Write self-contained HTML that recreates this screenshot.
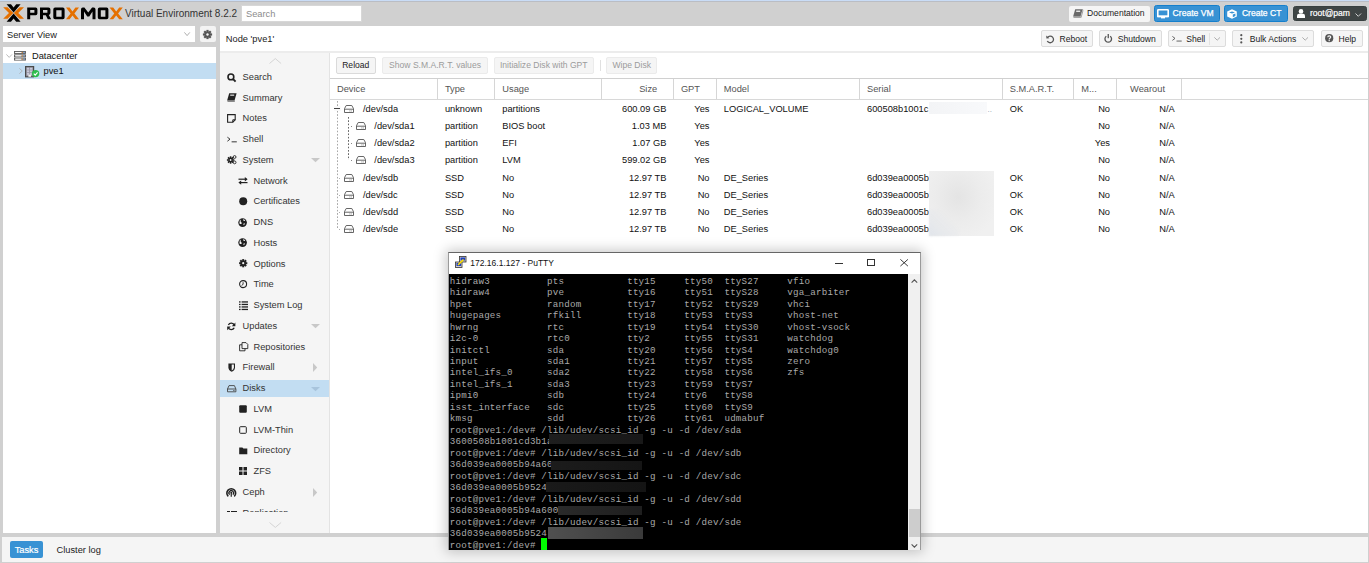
<!DOCTYPE html>
<html><head><meta charset="utf-8">
<style>
*{box-sizing:border-box;margin:0;padding:0}
html,body{width:1369px;height:563px;overflow:hidden}
body{background:#d0d0d0;font-family:"Liberation Sans",sans-serif;font-size:9.29px;color:#000;position:relative}
.a{position:absolute}
svg.a{overflow:visible}
.t{position:absolute;white-space:nowrap}
.term{position:absolute;font-family:"Liberation Mono",monospace;font-size:9.2px;color:#aaaaaa;line-height:11.48px;white-space:pre;letter-spacing:0.208px}
</style></head><body>

<div class="a" style="left:0.00px;top:0.00px;width:1369.00px;height:1.00px;background:#c9dcf6"></div>
<div class="a" style="left:0.00px;top:1.00px;width:1369.00px;height:1.00px;background:#babdc4"></div>
<svg class="a" style="left:0.00px;top:0.00px" width="126" height="26" viewBox="0 0 126 26">
<path d="M3.2 7.2 L7.6 7.2 L13.4 13 L7.6 18.8 L3.2 18.8 L9 13 Z" fill="#e57000"/>
<path d="M24 7.2 L19.6 7.2 L13.8 13 L19.6 18.8 L24 18.8 L18.2 13 Z" fill="#e57000"/>
<path d="M6.6 4.2 L11 4.2 L13.6 7.6 L16.2 4.2 L20.6 4.2 L13.6 12.6 Z" fill="#000"/>
<path d="M6.6 21.8 L11 21.8 L13.6 18.4 L16.2 21.8 L20.6 21.8 L13.6 13.4 Z" fill="#000"/>
<path d="M27.2 19.3 V7.6 H35.7 Q37.4 7.6 37.4 9.3 V13.6 Q37.4 15.3 35.7 15.3 H30.2 V19.3 Z M30.2 10.1 V12.8 H34.4 V10.1 Z" fill="#000" fill-rule="evenodd"/><path d="M40 19.3 V7.6 H48.5 Q50.4 7.6 50.4 9.3 V12.9 Q50.4 14.6 48.8 14.9 L51.2 19.3 H47.8 L45.8 15.2 H43 V19.3 Z M43 10.1 V12.7 H47.4 V10.1 Z" fill="#000" fill-rule="evenodd"/><path d="M55.099999999999994 7.6 H62.8 Q64.6 7.6 64.6 9.4 V17.5 Q64.6 19.3 62.8 19.3 H55.099999999999994 Q53.3 19.3 53.3 17.5 V9.4 Q53.3 7.6 55.099999999999994 7.6 Z M56.3 10.2 V16.7 H61.599999999999994 V10.2 Z" fill="#000" fill-rule="evenodd"/><path d="M66 7.6 H69.6 L72.5 11.5 L75.4 7.6 H79 L74.4 13.45 L79 19.3 H75.4 L72.5 15.4 L69.6 19.3 H66 L70.6 13.45 Z" fill="#e57000"/><path d="M81 19.3 V9.4 Q81 7.6 82.8 7.6 H84.4 L88.25 12.6 L92.1 7.6 H93.7 Q95.5 7.6 95.5 9.4 V19.3 H92.5 V11.6 L89.25 16.4 H87.25 L84 11.6 V19.3 Z" fill="#000"/><path d="M99.6 7.6 H106.6 Q108.39999999999999 7.6 108.39999999999999 9.4 V17.5 Q108.39999999999999 19.3 106.6 19.3 H99.6 Q97.8 19.3 97.8 17.5 V9.4 Q97.8 7.6 99.6 7.6 Z M100.8 10.2 V16.7 H105.39999999999999 V10.2 Z" fill="#000" fill-rule="evenodd"/><path d="M109.6 7.6 H113.19999999999999 L116.19999999999999 11.5 L119.2 7.6 H122.8 L118.1 13.45 L122.8 19.3 H119.2 L116.19999999999999 15.4 L113.19999999999999 19.3 H109.6 L114.29999999999998 13.45 Z" fill="#e57000"/></svg>
<div class="t " style="left:125.00px;top:6.50px;height:14px;line-height:14px;font-size:10.0px;color:#333;">Virtual Environment 8.2.2</div>
<div class="a" style="left:241.00px;top:5.00px;width:121.00px;height:17.00px;background:#fff;border:1px solid #d7d7d7"></div>
<div class="t " style="left:246.00px;top:6.50px;height:14px;line-height:14px;font-size:9.29px;color:#8c8c8c;">Search</div>
<div class="a" style="left:1069.00px;top:5.80px;width:81.00px;height:15.80px;background:#f5f5f5;border-radius:2px"></div>
<svg class="a" style="left:1072.50px;top:9.00px" width="10" height="9" viewBox="0 0 10 9"><path d="M2.2 0.3 H9.6 L7.6 7.3 H0.2 Z" fill="#6a6a6a"/><path d="M0.2 7.3 H7.6 L7.9 8.7 H0.6 Z" fill="#8a8a8a"/><rect x="3.2" y="1.6" width="4" height="1.3" fill="#f5f5f5"/><path d="M9.6 0.3 L9.9 1.8 L8 8.7" stroke="#8a8a8a" stroke-width="0.8" fill="none"/></svg>
<div class="t " style="left:1087.00px;top:6.10px;height:14px;line-height:14px;font-size:8.57px;color:#222;">Documentation</div>
<div class="a" style="left:1154.20px;top:5.20px;width:65.60px;height:16.80px;background:#3892d4;border:1px solid #157fcc;border-radius:2.5px"></div>
<svg class="a" style="left:1157.20px;top:8.60px" width="12" height="10" viewBox="0 0 12 10"><rect x="0.8" y="0.8" width="10.4" height="6.6" fill="none" stroke="#fff" stroke-width="1.6" rx="0.5"/><rect x="4" y="7.8" width="4" height="1.6" fill="#fff"/><rect x="0" y="6.6" width="12" height="1.6" fill="#fff"/></svg>
<div class="t " style="left:1172.60px;top:6.10px;height:14px;line-height:14px;font-size:8.57px;color:#fff;-webkit-text-stroke:0.25px #fff">Create VM</div>
<div class="a" style="left:1223.90px;top:5.20px;width:63.80px;height:16.80px;background:#3892d4;border:1px solid #157fcc;border-radius:2.5px"></div>
<svg class="a" style="left:1227.00px;top:9.00px" width="10" height="10" viewBox="0 0 10 10"><path d="M5 0.2 L9.8 2.4 V7.6 L5 9.8 L0.2 7.6 V2.4 Z" fill="#fff"/><path d="M5 2.6 L8 3.4 L5 4.4 L2 3.4 Z" fill="#3892d4"/><path d="M5.8 5.4 L8.4 4.4 V7 L5.8 8.2 Z" fill="#3892d4"/></svg>
<div class="t " style="left:1241.90px;top:6.10px;height:14px;line-height:14px;font-size:8.57px;color:#fff;-webkit-text-stroke:0.25px #fff">Create CT</div>
<div class="a" style="left:1292.80px;top:6.00px;width:74.00px;height:15.00px;background:#3f4545;border:1px solid #384040;border-radius:2.5px"></div>
<svg class="a" style="left:1296.50px;top:8.90px" width="8" height="9" viewBox="0 0 8 9"><circle cx="4" cy="2.4" r="2.3" fill="#fff"/><path d="M0 9 V6.8 Q0 4.8 2 4.8 H6 Q8 4.8 8 6.8 V9 Z" fill="#fff"/></svg>
<div class="t " style="left:1309.90px;top:6.10px;height:14px;line-height:14px;font-size:8.57px;color:#fff;-webkit-text-stroke:0.2px #fff">root@pam</div>
<svg class="a" style="left:1355.00px;top:12.80px" width="7" height="4" viewBox="0 0 7 4"><path d="M0.5 0.5 L3.3 3.3 L6.1 0.5" stroke="#ddd" stroke-width="0.9" fill="none"/></svg>
<div class="a" style="left:3.00px;top:26.40px;width:192.00px;height:15.80px;background:#fff"></div>
<div class="t " style="left:7.00px;top:28.00px;height:14px;line-height:14px;font-size:9.29px;color:#222;">Server View</div>
<svg class="a" style="left:184.00px;top:32.20px" width="7" height="4.5" viewBox="0 0 7 4.5"><path d="M0.4 0.4 L3.1 3.6 L5.8 0.4" stroke="#999" stroke-width="0.8" fill="none"/></svg>
<div class="a" style="left:200.00px;top:26.40px;width:16.00px;height:15.80px;background:#f3f3f3;border-radius:2px"></div>
<svg class="a" style="left:203.20px;top:29.80px" width="9" height="9" viewBox="0 0 9 9"><g transform="translate(4.5,4.5)" fill="#555"><rect x="-1.1" y="-4.6" width="2.2" height="2.6" transform="rotate(0)"/><rect x="-1.1" y="-4.6" width="2.2" height="2.6" transform="rotate(45)"/><rect x="-1.1" y="-4.6" width="2.2" height="2.6" transform="rotate(90)"/><rect x="-1.1" y="-4.6" width="2.2" height="2.6" transform="rotate(135)"/><rect x="-1.1" y="-4.6" width="2.2" height="2.6" transform="rotate(180)"/><rect x="-1.1" y="-4.6" width="2.2" height="2.6" transform="rotate(225)"/><rect x="-1.1" y="-4.6" width="2.2" height="2.6" transform="rotate(270)"/><rect x="-1.1" y="-4.6" width="2.2" height="2.6" transform="rotate(315)"/><circle r="3.1"/></g><circle cx="4.5" cy="4.5" r="1.2" fill="#f3f3f3"/></svg>
<div class="a" style="left:3.00px;top:47.00px;width:213.00px;height:486.00px;background:#fff"></div>
<div class="a" style="left:3.00px;top:63.20px;width:213.00px;height:15.50px;background:#c2ddf2"></div>
<svg class="a" style="left:6.40px;top:54.00px" width="6.5" height="4" viewBox="0 0 6.5 4"><path d="M0.4 0.4 L3.2 3.4 L6 0.4" stroke="#aaa" stroke-width="0.8" fill="none"/></svg>
<svg class="a" style="left:14.00px;top:51.20px" width="12" height="9" viewBox="0 0 12 9"><rect x="0.5" y="0.5" width="11" height="2" fill="#e8e8e8" stroke="#5a5a5a" stroke-width="0.9"/><rect x="1.6" y="1.2" width="5.5" height="0.8" fill="#fff"/><rect x="7.6" y="1.0" width="1.4" height="1.2" fill="#c08040"/><rect x="9.4" y="1.0" width="1.2" height="1.2" fill="#4070b0"/><rect x="0.5" y="3.8" width="11" height="2" fill="#e8e8e8" stroke="#5a5a5a" stroke-width="0.9"/><rect x="1.6" y="4.5" width="5.5" height="0.8" fill="#fff"/><rect x="7.6" y="4.3" width="1.4" height="1.2" fill="#c08040"/><rect x="9.4" y="4.3" width="1.2" height="1.2" fill="#4070b0"/><rect x="0.5" y="7.1" width="11" height="2" fill="#e8e8e8" stroke="#5a5a5a" stroke-width="0.9"/><rect x="1.6" y="7.8" width="5.5" height="0.8" fill="#fff"/><rect x="7.6" y="7.6" width="1.4" height="1.2" fill="#c08040"/><rect x="9.4" y="7.6" width="1.2" height="1.2" fill="#4070b0"/></svg>
<div class="t " style="left:32.00px;top:48.50px;height:14px;line-height:14px;font-size:9.29px;color:#111;">Datacenter</div>
<svg class="a" style="left:19.20px;top:68.40px" width="4" height="6" viewBox="0 0 4 6"><path d="M0.4 0.4 L3.3 3 L0.4 5.6" stroke="#aaa" stroke-width="0.8" fill="none"/></svg>
<svg class="a" style="left:25.20px;top:66.00px" width="14" height="11.5" viewBox="0 0 14 11.5"><rect x="0.6" y="0.6" width="8" height="10.2" fill="#9a9aa8" stroke="#4a4a4a" stroke-width="1.2"/><rect x="1.9" y="1.8" width="2.2" height="1.8" fill="#c8c8d8"/><rect x="5.0" y="1.8" width="2.2" height="1.8" fill="#c8c8d8"/><rect x="1.9" y="4.4" width="2.2" height="1.8" fill="#c8c8d8"/><rect x="5.0" y="4.4" width="2.2" height="1.8" fill="#c8c8d8"/><rect x="1.9" y="7.0" width="2.2" height="1.8" fill="#c8c8d8"/><rect x="5.0" y="7.0" width="2.2" height="1.8" fill="#c8c8d8"/><rect x="3.4" y="8.6" width="2.6" height="2.2" fill="#eee"/><circle cx="10.6" cy="7.6" r="3.7" fill="#2ebd4e"/><path d="M8.8 7.7 L10.2 9.1 L12.6 6.4" stroke="#fff" stroke-width="1.1" fill="none"/></svg>
<div class="t " style="left:43.50px;top:64.00px;height:14px;line-height:14px;font-size:9.29px;color:#111;">pve1</div>
<div class="a" style="left:220.00px;top:26.00px;width:1148.20px;height:507.00px;background:#fff"></div>
<div class="a" style="left:1368.20px;top:26.00px;width:0.80px;height:537.00px;background:#cfcfcf"></div>
<div class="a" style="left:220.00px;top:51.00px;width:1148.00px;height:2.00px;background:#ececec"></div>
<div class="t " style="left:225.80px;top:31.60px;height:14px;line-height:14px;font-size:9.29px;color:#222;">Node 'pve1'</div>
<div class="a" style="left:1041.40px;top:30.10px;width:52.10px;height:16.60px;background:#f5f5f5;border:1px solid #dcdcdc;border-radius:2px"></div>
<svg class="a" style="left:1045.80px;top:34.50px" width="8.5" height="8.5" viewBox="0 0 8.5 8.5"><path d="M1.6 2.4 A3.3 3.3 0 1 1 1.3 6" stroke="#555" stroke-width="1.3" fill="none"/><path d="M0.2 0.6 L0.4 3.6 L3.4 3.2 Z" fill="#555"/></svg>
<div class="t " style="left:1059.50px;top:31.60px;height:14px;line-height:14px;font-size:8.57px;color:#222;">Reboot</div>
<div class="a" style="left:1099.10px;top:30.10px;width:62.60px;height:16.60px;background:#f5f5f5;border:1px solid #dcdcdc;border-radius:2px"></div>
<svg class="a" style="left:1103.50px;top:34.40px" width="8.5" height="8.6" viewBox="0 0 8.5 8.6"><path d="M2.3 2.2 A3.3 3.3 0 1 0 6.2 2.2" stroke="#555" stroke-width="1.3" fill="none"/><rect x="3.6" y="0" width="1.3" height="4.2" fill="#555"/></svg>
<div class="t " style="left:1117.70px;top:31.60px;height:14px;line-height:14px;font-size:8.57px;color:#222;">Shutdown</div>
<div class="a" style="left:1168.20px;top:30.10px;width:57.50px;height:16.60px;background:#f5f5f5;border:1px solid #dcdcdc;border-radius:2px"></div>
<svg class="a" style="left:1171.50px;top:35.00px" width="10" height="7" viewBox="0 0 10 7"><path d="M0.4 1.4 L3 3.4 L0.4 5.4" stroke="#555" stroke-width="0.9" fill="none"/><rect x="4.5" y="5.6" width="5.2" height="0.9" fill="#555"/></svg>
<div class="t " style="left:1186.20px;top:31.60px;height:14px;line-height:14px;font-size:8.57px;color:#222;">Shell</div>
<div class="a" style="left:1209.40px;top:32.50px;width:0.80px;height:12.00px;background:#e2e2e2"></div>
<svg class="a" style="left:1214.20px;top:37.20px" width="6.5" height="4" viewBox="0 0 6.5 4"><path d="M0.4 0.4 L3.2 3.2 L6 0.4" stroke="#999" stroke-width="0.8" fill="none"/></svg>
<div class="a" style="left:1232.10px;top:30.10px;width:81.60px;height:16.60px;background:#f5f5f5;border:1px solid #dcdcdc;border-radius:2px"></div>
<svg class="a" style="left:1239.50px;top:33.80px" width="3" height="10" viewBox="0 0 3 10"><circle cx="1.3" cy="1.2" r="1.1" fill="#555"/><circle cx="1.3" cy="4.8" r="1.1" fill="#555"/><circle cx="1.3" cy="8.4" r="1.1" fill="#555"/></svg>
<div class="t " style="left:1249.70px;top:31.60px;height:14px;line-height:14px;font-size:8.57px;color:#222;">Bulk Actions</div>
<svg class="a" style="left:1301.80px;top:37.20px" width="6.5" height="4" viewBox="0 0 6.5 4"><path d="M0.4 0.4 L3.2 3.2 L6 0.4" stroke="#999" stroke-width="0.8" fill="none"/></svg>
<div class="a" style="left:1320.50px;top:30.10px;width:42.40px;height:16.60px;background:#f5f5f5;border:1px solid #dcdcdc;border-radius:2px"></div>
<svg class="a" style="left:1325.00px;top:34.40px" width="8.4" height="8.4" viewBox="0 0 8.4 8.4"><circle cx="4.2" cy="4.2" r="4.1" fill="#555"/><path d="M2.8 3.3 Q2.8 1.8 4.2 1.8 Q5.7 1.8 5.7 3.1 Q5.7 3.9 4.7 4.4 Q4.2 4.7 4.2 5.4" stroke="#f5f5f5" stroke-width="1.2" fill="none"/><rect x="3.6" y="6" width="1.2" height="1.2" fill="#f5f5f5"/></svg>
<div class="t " style="left:1338.50px;top:31.60px;height:14px;line-height:14px;font-size:8.57px;color:#222;">Help</div>
<div class="a" style="left:220.00px;top:53.00px;width:109.20px;height:480.00px;background:#f5f5f5"></div>
<div class="a" style="left:329.20px;top:53.00px;width:0.80px;height:480.00px;background:#e3e3e3"></div>
<svg class="a" style="left:269.00px;top:57.50px" width="13" height="6" viewBox="0 0 13 6"><path d="M0.5 5.5 L6.3 0.6 L12.1 5.5" stroke="#ccc" stroke-width="0.8" fill="none"/></svg>
<svg class="a" style="left:269.00px;top:521.50px" width="13" height="6" viewBox="0 0 13 6"><path d="M0.5 0.5 L6.3 5.4 L12.1 0.5" stroke="#ccc" stroke-width="0.8" fill="none"/></svg>
<div class="a" style="left:219.50px;top:380.00px;width:109.80px;height:17.20px;background:#c2ddf2"></div>
<div class="a" style="left:220px;top:52px;width:109px;height:460px;overflow:hidden">
<div class="t" style="left:22.60px;top:17.80px;height:14px;line-height:14px;font-size:9.29px;color:#333">Search</div>
<div class="t" style="left:22.60px;top:38.56px;height:14px;line-height:14px;font-size:9.29px;color:#333">Summary</div>
<div class="t" style="left:22.60px;top:59.32px;height:14px;line-height:14px;font-size:9.29px;color:#333">Notes</div>
<div class="t" style="left:22.60px;top:80.08px;height:14px;line-height:14px;font-size:9.29px;color:#333">Shell</div>
<div class="t" style="left:22.60px;top:100.84px;height:14px;line-height:14px;font-size:9.29px;color:#333">System</div>
<div class="t" style="left:33.50px;top:121.60px;height:14px;line-height:14px;font-size:9.29px;color:#333">Network</div>
<div class="t" style="left:33.50px;top:142.36px;height:14px;line-height:14px;font-size:9.29px;color:#333">Certificates</div>
<div class="t" style="left:33.50px;top:163.12px;height:14px;line-height:14px;font-size:9.29px;color:#333">DNS</div>
<div class="t" style="left:33.50px;top:183.88px;height:14px;line-height:14px;font-size:9.29px;color:#333">Hosts</div>
<div class="t" style="left:33.50px;top:204.64px;height:14px;line-height:14px;font-size:9.29px;color:#333">Options</div>
<div class="t" style="left:33.50px;top:225.40px;height:14px;line-height:14px;font-size:9.29px;color:#333">Time</div>
<div class="t" style="left:33.50px;top:246.16px;height:14px;line-height:14px;font-size:9.29px;color:#333">System Log</div>
<div class="t" style="left:22.60px;top:266.92px;height:14px;line-height:14px;font-size:9.29px;color:#333">Updates</div>
<div class="t" style="left:33.50px;top:287.68px;height:14px;line-height:14px;font-size:9.29px;color:#333">Repositories</div>
<div class="t" style="left:22.60px;top:308.44px;height:14px;line-height:14px;font-size:9.29px;color:#333">Firewall</div>
<div class="t" style="left:22.60px;top:329.20px;height:14px;line-height:14px;font-size:9.29px;color:#333">Disks</div>
<div class="t" style="left:33.50px;top:349.96px;height:14px;line-height:14px;font-size:9.29px;color:#333">LVM</div>
<div class="t" style="left:33.50px;top:370.72px;height:14px;line-height:14px;font-size:9.29px;color:#333">LVM-Thin</div>
<div class="t" style="left:33.50px;top:391.48px;height:14px;line-height:14px;font-size:9.29px;color:#333">Directory</div>
<div class="t" style="left:33.50px;top:412.24px;height:14px;line-height:14px;font-size:9.29px;color:#333">ZFS</div>
<div class="t" style="left:22.60px;top:433.00px;height:14px;line-height:14px;font-size:9.29px;color:#333">Ceph</div>
<div class="t" style="left:22.60px;top:453.76px;height:14px;line-height:14px;font-size:9.29px;color:#333">Replication</div>
</div>
<svg class="a" style="left:227.00px;top:72.50px" width="9.5" height="9" viewBox="0 0 9.5 9"><circle cx="3.9" cy="3.9" r="2.9" stroke="#222" stroke-width="1.6" fill="none"/><path d="M6 6 L8.6 8.6" stroke="#222" stroke-width="1.8"/></svg>
<svg class="a" style="left:226.90px;top:93.26px" width="10" height="9" viewBox="0 0 10 9"><path d="M2.2 0.3 H9.6 L7.6 7.3 H0.2 Z" fill="#222"/><path d="M0.2 7.3 H7.6 L7.9 8.7 H0.6 Z" fill="#666"/><rect x="3.2" y="1.6" width="4" height="1.1" fill="#f5f5f5"/></svg>
<svg class="a" style="left:227.20px;top:114.02px" width="9" height="9" viewBox="0 0 9 9"><path d="M0.6 0.6 H8.2 V5.8 L5.8 8.2 H0.6 Z" stroke="#222" stroke-width="1.1" fill="none"/><path d="M8.2 5.8 H5.8 V8.2" stroke="#222" stroke-width="1" fill="none"/></svg>
<svg class="a" style="left:226.50px;top:136.28px" width="10.5" height="7" viewBox="0 0 10.5 7"><path d="M0.4 1.2 L3 3.2 L0.4 5.2" stroke="#222" stroke-width="0.9" fill="none"/><rect x="4.6" y="5.4" width="5.2" height="0.9" fill="#222"/></svg>
<svg class="a" style="left:226.70px;top:155.34px" width="10" height="9" viewBox="0 0 10 9"><g transform="translate(3.6,5)"><circle r="2.4" fill="#222"/><rect x="-0.8" y="-3.7" width="1.6" height="1.8" fill="#222" transform="rotate(0)"/><rect x="-0.8" y="-3.7" width="1.6" height="1.8" fill="#222" transform="rotate(45)"/><rect x="-0.8" y="-3.7" width="1.6" height="1.8" fill="#222" transform="rotate(90)"/><rect x="-0.8" y="-3.7" width="1.6" height="1.8" fill="#222" transform="rotate(135)"/><rect x="-0.8" y="-3.7" width="1.6" height="1.8" fill="#222" transform="rotate(180)"/><rect x="-0.8" y="-3.7" width="1.6" height="1.8" fill="#222" transform="rotate(225)"/><rect x="-0.8" y="-3.7" width="1.6" height="1.8" fill="#222" transform="rotate(270)"/><rect x="-0.8" y="-3.7" width="1.6" height="1.8" fill="#222" transform="rotate(315)"/><circle r="0.9" fill="#f5f5f5"/></g><g transform="translate(7.6,2)"><circle r="1.4" stroke="#222" stroke-width="0.9" fill="none"/></g><g transform="translate(7.6,7.4)"><circle r="1.4" stroke="#222" stroke-width="0.9" fill="none"/></g></svg>
<svg class="a" style="left:238.00px;top:177.00px" width="10" height="7.5" viewBox="0 0 10 7.5"><path d="M0.5 2.2 H8.5" stroke="#222" stroke-width="1.2"/><path d="M6.8 0 L9.6 2.2 L6.8 4.4 Z" fill="#222" transform="translate(0,-0)"/><path d="M1.5 5.6 H9.5" stroke="#222" stroke-width="1.2"/><path d="M3.2 3.4 L0.4 5.6 L3.2 7.8 Z" fill="#222"/></svg>
<svg class="a" style="left:238.80px;top:197.16px" width="8.5" height="8.5" viewBox="0 0 8.5 8.5"><circle cx="4.2" cy="4.2" r="4" fill="#222"/></svg>
<svg class="a" style="left:238.40px;top:217.52px" width="9.5" height="9.5" viewBox="0 0 9.5 9.5"><circle cx="4.6" cy="4.6" r="4.3" fill="#222"/><path d="M2 1.6 Q3.2 2.4 2.6 3.6 Q4 4.4 3.6 6 Q2.2 6.4 1.4 5.2 Z M5.2 1 Q6.8 1.4 7.2 3 Q6 3.4 5.4 2.4 Z M5.6 5.4 Q6.6 5 7 5.8 Q6.4 7 5.4 7.2 Z" fill="#f5f5f5"/></svg>
<svg class="a" style="left:238.40px;top:238.28px" width="9.5" height="9.5" viewBox="0 0 9.5 9.5"><circle cx="4.6" cy="4.6" r="4.3" fill="#222"/><path d="M2 1.6 Q3.2 2.4 2.6 3.6 Q4 4.4 3.6 6 Q2.2 6.4 1.4 5.2 Z M5.2 1 Q6.8 1.4 7.2 3 Q6 3.4 5.4 2.4 Z M5.6 5.4 Q6.6 5 7 5.8 Q6.4 7 5.4 7.2 Z" fill="#f5f5f5"/></svg>
<svg class="a" style="left:238.80px;top:259.44px" width="8.5" height="8.5" viewBox="0 0 8.5 8.5"><g transform="translate(4.2,4.2)"><circle r="2.8" fill="#222"/><rect x="-1" y="-4.1" width="2" height="2.2" fill="#222" transform="rotate(0)"/><rect x="-1" y="-4.1" width="2" height="2.2" fill="#222" transform="rotate(45)"/><rect x="-1" y="-4.1" width="2" height="2.2" fill="#222" transform="rotate(90)"/><rect x="-1" y="-4.1" width="2" height="2.2" fill="#222" transform="rotate(135)"/><rect x="-1" y="-4.1" width="2" height="2.2" fill="#222" transform="rotate(180)"/><rect x="-1" y="-4.1" width="2" height="2.2" fill="#222" transform="rotate(225)"/><rect x="-1" y="-4.1" width="2" height="2.2" fill="#222" transform="rotate(270)"/><rect x="-1" y="-4.1" width="2" height="2.2" fill="#222" transform="rotate(315)"/><circle r="1.1" fill="#f5f5f5"/></g></svg>
<svg class="a" style="left:238.90px;top:280.30px" width="8.5" height="8.5" viewBox="0 0 8.5 8.5"><circle cx="4.1" cy="4.1" r="3.5" stroke="#222" stroke-width="1.1" fill="none"/><path d="M4.1 2.2 V4.4 L2.6 5.4" stroke="#222" stroke-width="0.9" fill="none"/></svg>
<svg class="a" style="left:238.50px;top:300.66px" width="9" height="9.5" viewBox="0 0 9 9.5"><rect x="0" y="0.3" width="1.6" height="1.3" fill="#222"/><rect x="2.6" y="0.3" width="6.4" height="1.3" fill="#222"/><rect x="0" y="2.8" width="1.6" height="1.3" fill="#222"/><rect x="2.6" y="2.8" width="6.4" height="1.3" fill="#222"/><rect x="0" y="5.3" width="1.6" height="1.3" fill="#222"/><rect x="2.6" y="5.3" width="6.4" height="1.3" fill="#222"/><rect x="0" y="7.8" width="1.6" height="1.3" fill="#222"/><rect x="2.6" y="7.8" width="6.4" height="1.3" fill="#222"/></svg>
<svg class="a" style="left:227.10px;top:321.52px" width="9" height="9" viewBox="0 0 9 9"><path d="M7.4 3.2 A3.3 3.3 0 0 0 1.4 3" stroke="#222" stroke-width="1.4" fill="none"/><path d="M8.4 0.6 V4.2 H4.8 Z" fill="#222"/><path d="M1.2 5.6 A3.3 3.3 0 0 0 7.2 5.8" stroke="#222" stroke-width="1.4" fill="none"/><path d="M0.2 8.2 V4.6 H3.8 Z" fill="#222"/></svg>
<svg class="a" style="left:238.50px;top:342.08px" width="9.5" height="9.5" viewBox="0 0 9.5 9.5"><path d="M3 0.6 H7 L8.8 2.4 V6.6 H3 Z" stroke="#222" stroke-width="0.9" fill="none"/><path d="M0.6 2.8 H3 M0.6 2.8 V8.8 H6 V6.6" stroke="#222" stroke-width="0.9" fill="none"/></svg>
<svg class="a" style="left:227.90px;top:363.04px" width="7.5" height="9" viewBox="0 0 7.5 9"><path d="M0.4 0.6 H7 V4.2 Q7 7.2 3.7 8.8 Q0.4 7.2 0.4 4.2 Z" fill="#222"/><path d="M3.7 1.6 H5.9 V4.2 Q5.9 6.4 3.7 7.5 Z" fill="#f5f5f5"/></svg>
<svg class="a" style="left:226.90px;top:384.60px" width="9.5" height="7.5" viewBox="0 0 9.5 7.5"><path d="M2 0.6 H7.4 L8.9 4 V6.8 H0.5 V4 Z" stroke="#444" stroke-width="0.9" fill="none"/><path d="M0.5 4 H8.9" stroke="#444" stroke-width="0.9"/><rect x="6.3" y="5" width="1.2" height="0.9" fill="#444"/></svg>
<svg class="a" style="left:239.00px;top:404.96px" width="8" height="8" viewBox="0 0 8 8"><rect x="0.2" y="0.2" width="7.6" height="7.6" rx="1" fill="#222"/></svg>
<svg class="a" style="left:239.00px;top:425.72px" width="8" height="8" viewBox="0 0 8 8"><rect x="0.7" y="0.7" width="6.6" height="6.6" rx="0.8" stroke="#222" stroke-width="1" fill="none"/></svg>
<svg class="a" style="left:238.80px;top:446.68px" width="8.5" height="7.5" viewBox="0 0 8.5 7.5"><path d="M0.2 0.4 H3.4 L4.4 1.4 H8.3 V7.2 H0.2 Z" fill="#222"/></svg>
<svg class="a" style="left:239.00px;top:467.24px" width="8" height="8" viewBox="0 0 8 8"><rect x="0" y="0" width="3.5" height="3.5" fill="#222"/><rect x="4.5" y="0" width="3.5" height="3.5" fill="#222"/><rect x="0" y="4.5" width="3.5" height="3.5" fill="#222"/><rect x="4.5" y="4.5" width="3.5" height="3.5" fill="#222"/></svg>
<svg class="a" style="left:226.30px;top:486.60px" width="10.5" height="10.5" viewBox="0 0 10.5 10.5"><path d="M2.3 9.4 A4.4 4.4 0 1 1 8.2 9.4" stroke="#222" stroke-width="1.6" fill="none"/><path d="M3.6 7.6 A2.3 2.3 0 1 1 6.9 7.6" stroke="#222" stroke-width="1.3" fill="none"/><circle cx="5.25" cy="5.6" r="0.9" fill="#222"/><path d="M5.25 5.6 V9.8" stroke="#222" stroke-width="1.2"/></svg>
<div class="a" style="left:225px;top:508px;width:20px;height:4px;overflow:hidden"><div class="a" style="left:2px;top:2.5px;width:3px;height:1.6px;background:#222"></div><div class="a" style="left:5.5px;top:2.5px;width:6px;height:1.6px;background:#222"></div></div>
<svg class="a" style="left:311.00px;top:158.20px" width="9" height="4.5" viewBox="0 0 9 4.5"><path d="M0 0 H9 L4.5 4.2 Z" fill="#c8c8c8"/></svg>
<svg class="a" style="left:311.00px;top:324.30px" width="9" height="4.5" viewBox="0 0 9 4.5"><path d="M0 0 H9 L4.5 4.2 Z" fill="#c8c8c8"/></svg>
<svg class="a" style="left:312.50px;top:362.90px" width="4.5" height="9" viewBox="0 0 4.5 9"><path d="M0 0 V9 L4.2 4.5 Z" fill="#c8c8c8"/></svg>
<svg class="a" style="left:311.00px;top:386.50px" width="9" height="4.5" viewBox="0 0 9 4.5"><path d="M0 0 H9 L4.5 4.2 Z" fill="#a8c4dc"/></svg>
<svg class="a" style="left:312.50px;top:487.50px" width="4.5" height="9" viewBox="0 0 4.5 9"><path d="M0 0 V9 L4.2 4.5 Z" fill="#c8c8c8"/></svg>
<div class="a" style="left:336.00px;top:56.70px;width:39.50px;height:16.90px;background:#f5f5f5;border:1px solid #dadada;border-radius:2px"></div>
<div class="t " style="left:355.75px;top:58.15px;height:14px;line-height:14px;font-size:8.57px;color:#222;transform:translateX(-50%)">Reload</div>
<div class="a" style="left:382.40px;top:56.70px;width:105.20px;height:16.90px;background:#f5f5f5;border:1px solid #ebebeb;border-radius:2px"></div>
<div class="t " style="left:435.00px;top:58.15px;height:14px;line-height:14px;font-size:8.57px;color:#9b9b9b;transform:translateX(-50%)">Show S.M.A.R.T. values</div>
<div class="a" style="left:493.50px;top:56.70px;width:100.50px;height:16.90px;background:#f5f5f5;border:1px solid #ebebeb;border-radius:2px"></div>
<div class="t " style="left:543.75px;top:58.15px;height:14px;line-height:14px;font-size:8.57px;color:#9b9b9b;transform:translateX(-50%)">Initialize Disk with GPT</div>
<div class="a" style="left:600.00px;top:59.50px;width:0.80px;height:11.00px;background:#e0e0e0"></div>
<div class="a" style="left:606.40px;top:56.70px;width:50.60px;height:16.90px;background:#f5f5f5;border:1px solid #ebebeb;border-radius:2px"></div>
<div class="t " style="left:631.70px;top:58.15px;height:14px;line-height:14px;font-size:8.57px;color:#9b9b9b;transform:translateX(-50%)">Wipe Disk</div>
<div class="a" style="left:330.00px;top:78.00px;width:1038.20px;height:1.00px;background:#d0d0d0"></div>
<div class="a" style="left:330.00px;top:99.00px;width:1038.20px;height:1.00px;background:#d8d8d8"></div>
<div class="a" style="left:436.90px;top:79.00px;width:1.00px;height:20.00px;background:#d6d6d6"></div>
<div class="a" style="left:493.80px;top:79.00px;width:1.00px;height:20.00px;background:#d6d6d6"></div>
<div class="a" style="left:600.50px;top:79.00px;width:1.00px;height:20.00px;background:#d6d6d6"></div>
<div class="a" style="left:672.70px;top:79.00px;width:1.00px;height:20.00px;background:#d6d6d6"></div>
<div class="a" style="left:716.30px;top:79.00px;width:1.00px;height:20.00px;background:#d6d6d6"></div>
<div class="a" style="left:858.90px;top:79.00px;width:1.00px;height:20.00px;background:#d6d6d6"></div>
<div class="a" style="left:1002.10px;top:79.00px;width:1.00px;height:20.00px;background:#d6d6d6"></div>
<div class="a" style="left:1073.00px;top:79.00px;width:1.00px;height:20.00px;background:#d6d6d6"></div>
<div class="a" style="left:1116.30px;top:79.00px;width:1.00px;height:20.00px;background:#d6d6d6"></div>
<div class="a" style="left:1181.30px;top:79.00px;width:1.00px;height:20.00px;background:#d6d6d6"></div>
<div class="t " style="left:337.00px;top:82.00px;height:14px;line-height:14px;font-size:9.29px;color:#555;">Device</div>
<div class="t " style="left:444.90px;top:82.00px;height:14px;line-height:14px;font-size:9.29px;color:#555;">Type</div>
<div class="t " style="left:502.30px;top:82.00px;height:14px;line-height:14px;font-size:9.29px;color:#555;">Usage</div>
<div class="t " style="right:711.80px;top:82.00px;height:14px;line-height:14px;font-size:9.29px;color:#555;">Size</div>
<div class="t " style="left:680.90px;top:82.00px;height:14px;line-height:14px;font-size:9.29px;color:#555;">GPT</div>
<div class="t " style="left:723.80px;top:82.00px;height:14px;line-height:14px;font-size:9.29px;color:#555;">Model</div>
<div class="t " style="left:867.00px;top:82.00px;height:14px;line-height:14px;font-size:9.29px;color:#555;">Serial</div>
<div class="t " style="left:1009.70px;top:82.00px;height:14px;line-height:14px;font-size:9.29px;color:#555;">S.M.A.R.T.</div>
<div class="t " style="left:1081.30px;top:82.00px;height:14px;line-height:14px;font-size:9.29px;color:#555;">M...</div>
<div class="t " style="right:204.00px;top:82.00px;height:14px;line-height:14px;font-size:9.29px;color:#555;">Wearout</div>
<svg class="a" style="left:344.10px;top:105.00px" width="10" height="8" viewBox="0 0 10 8"><path d="M2.2 0.5 H7.8 L9.5 3.6 V7.5 H0.5 V3.6 Z" stroke="#555" stroke-width="0.9" fill="none"/><path d="M0.5 4.2 H9.5" stroke="#555" stroke-width="0.9"/><rect x="6.6" y="5.5" width="1.1" height="0.9" fill="#777"/><rect x="5.2" y="5.5" width="0.9" height="0.9" fill="#999"/></svg>
<div class="t " style="left:363.00px;top:102.00px;height:14px;line-height:14px;font-size:9.29px;color:#111;">/dev/sda</div>
<div class="t " style="left:444.90px;top:102.00px;height:14px;line-height:14px;font-size:9.29px;color:#111;">unknown</div>
<div class="t " style="left:502.30px;top:102.00px;height:14px;line-height:14px;font-size:9.29px;color:#111;">partitions</div>
<div class="t " style="right:702.60px;top:102.00px;height:14px;line-height:14px;font-size:9.29px;color:#111;">600.09 GB</div>
<div class="t " style="right:659.50px;top:102.00px;height:14px;line-height:14px;font-size:9.29px;color:#111;">Yes</div>
<div class="t " style="left:723.80px;top:102.00px;height:14px;line-height:14px;font-size:9.29px;color:#111;">LOGICAL_VOLUME</div>
<div class="t " style="left:867.00px;top:102.00px;height:14px;line-height:14px;font-size:9.29px;color:#111;">600508b1001c</div>
<div class="t " style="left:1009.70px;top:102.00px;height:14px;line-height:14px;font-size:9.29px;color:#111;">OK</div>
<div class="t " style="right:259.00px;top:102.00px;height:14px;line-height:14px;font-size:9.29px;color:#111;">No</div>
<div class="t " style="right:194.20px;top:102.00px;height:14px;line-height:14px;font-size:9.29px;color:#111;">N/A</div>
<svg class="a" style="left:355.60px;top:122.14px" width="10" height="8" viewBox="0 0 10 8"><path d="M2.2 0.5 H7.8 L9.5 3.6 V7.5 H0.5 V3.6 Z" stroke="#555" stroke-width="0.9" fill="none"/><path d="M0.5 4.2 H9.5" stroke="#555" stroke-width="0.9"/><rect x="6.6" y="5.5" width="1.1" height="0.9" fill="#777"/><rect x="5.2" y="5.5" width="0.9" height="0.9" fill="#999"/></svg>
<div class="t " style="left:374.30px;top:119.14px;height:14px;line-height:14px;font-size:9.29px;color:#111;">/dev/sda1</div>
<div class="t " style="left:444.90px;top:119.14px;height:14px;line-height:14px;font-size:9.29px;color:#111;">partition</div>
<div class="t " style="left:502.30px;top:119.14px;height:14px;line-height:14px;font-size:9.29px;color:#111;">BIOS boot</div>
<div class="t " style="right:702.60px;top:119.14px;height:14px;line-height:14px;font-size:9.29px;color:#111;">1.03 MB</div>
<div class="t " style="right:659.50px;top:119.14px;height:14px;line-height:14px;font-size:9.29px;color:#111;">Yes</div>
<div class="t " style="right:259.00px;top:119.14px;height:14px;line-height:14px;font-size:9.29px;color:#111;">No</div>
<div class="t " style="right:194.20px;top:119.14px;height:14px;line-height:14px;font-size:9.29px;color:#111;">N/A</div>
<svg class="a" style="left:355.60px;top:139.28px" width="10" height="8" viewBox="0 0 10 8"><path d="M2.2 0.5 H7.8 L9.5 3.6 V7.5 H0.5 V3.6 Z" stroke="#555" stroke-width="0.9" fill="none"/><path d="M0.5 4.2 H9.5" stroke="#555" stroke-width="0.9"/><rect x="6.6" y="5.5" width="1.1" height="0.9" fill="#777"/><rect x="5.2" y="5.5" width="0.9" height="0.9" fill="#999"/></svg>
<div class="t " style="left:374.30px;top:136.28px;height:14px;line-height:14px;font-size:9.29px;color:#111;">/dev/sda2</div>
<div class="t " style="left:444.90px;top:136.28px;height:14px;line-height:14px;font-size:9.29px;color:#111;">partition</div>
<div class="t " style="left:502.30px;top:136.28px;height:14px;line-height:14px;font-size:9.29px;color:#111;">EFI</div>
<div class="t " style="right:702.60px;top:136.28px;height:14px;line-height:14px;font-size:9.29px;color:#111;">1.07 GB</div>
<div class="t " style="right:659.50px;top:136.28px;height:14px;line-height:14px;font-size:9.29px;color:#111;">Yes</div>
<div class="t " style="right:259.00px;top:136.28px;height:14px;line-height:14px;font-size:9.29px;color:#111;">Yes</div>
<div class="t " style="right:194.20px;top:136.28px;height:14px;line-height:14px;font-size:9.29px;color:#111;">N/A</div>
<svg class="a" style="left:355.60px;top:156.42px" width="10" height="8" viewBox="0 0 10 8"><path d="M2.2 0.5 H7.8 L9.5 3.6 V7.5 H0.5 V3.6 Z" stroke="#555" stroke-width="0.9" fill="none"/><path d="M0.5 4.2 H9.5" stroke="#555" stroke-width="0.9"/><rect x="6.6" y="5.5" width="1.1" height="0.9" fill="#777"/><rect x="5.2" y="5.5" width="0.9" height="0.9" fill="#999"/></svg>
<div class="t " style="left:374.30px;top:153.42px;height:14px;line-height:14px;font-size:9.29px;color:#111;">/dev/sda3</div>
<div class="t " style="left:444.90px;top:153.42px;height:14px;line-height:14px;font-size:9.29px;color:#111;">partition</div>
<div class="t " style="left:502.30px;top:153.42px;height:14px;line-height:14px;font-size:9.29px;color:#111;">LVM</div>
<div class="t " style="right:702.60px;top:153.42px;height:14px;line-height:14px;font-size:9.29px;color:#111;">599.02 GB</div>
<div class="t " style="right:659.50px;top:153.42px;height:14px;line-height:14px;font-size:9.29px;color:#111;">Yes</div>
<div class="t " style="right:259.00px;top:153.42px;height:14px;line-height:14px;font-size:9.29px;color:#111;">No</div>
<div class="t " style="right:194.20px;top:153.42px;height:14px;line-height:14px;font-size:9.29px;color:#111;">N/A</div>
<svg class="a" style="left:344.10px;top:173.56px" width="10" height="8" viewBox="0 0 10 8"><path d="M2.2 0.5 H7.8 L9.5 3.6 V7.5 H0.5 V3.6 Z" stroke="#555" stroke-width="0.9" fill="none"/><path d="M0.5 4.2 H9.5" stroke="#555" stroke-width="0.9"/><rect x="6.6" y="5.5" width="1.1" height="0.9" fill="#777"/><rect x="5.2" y="5.5" width="0.9" height="0.9" fill="#999"/></svg>
<div class="t " style="left:363.00px;top:170.56px;height:14px;line-height:14px;font-size:9.29px;color:#111;">/dev/sdb</div>
<div class="t " style="left:444.90px;top:170.56px;height:14px;line-height:14px;font-size:9.29px;color:#111;">SSD</div>
<div class="t " style="left:502.30px;top:170.56px;height:14px;line-height:14px;font-size:9.29px;color:#111;">No</div>
<div class="t " style="right:702.60px;top:170.56px;height:14px;line-height:14px;font-size:9.29px;color:#111;">12.97 TB</div>
<div class="t " style="right:659.50px;top:170.56px;height:14px;line-height:14px;font-size:9.29px;color:#111;">No</div>
<div class="t " style="left:723.80px;top:170.56px;height:14px;line-height:14px;font-size:9.29px;color:#111;">DE_Series</div>
<div class="t " style="left:867.00px;top:170.56px;height:14px;line-height:14px;font-size:9.29px;color:#111;">6d039ea0005b</div>
<div class="t " style="left:1009.70px;top:170.56px;height:14px;line-height:14px;font-size:9.29px;color:#111;">OK</div>
<div class="t " style="right:259.00px;top:170.56px;height:14px;line-height:14px;font-size:9.29px;color:#111;">No</div>
<div class="t " style="right:194.20px;top:170.56px;height:14px;line-height:14px;font-size:9.29px;color:#111;">N/A</div>
<svg class="a" style="left:344.10px;top:190.70px" width="10" height="8" viewBox="0 0 10 8"><path d="M2.2 0.5 H7.8 L9.5 3.6 V7.5 H0.5 V3.6 Z" stroke="#555" stroke-width="0.9" fill="none"/><path d="M0.5 4.2 H9.5" stroke="#555" stroke-width="0.9"/><rect x="6.6" y="5.5" width="1.1" height="0.9" fill="#777"/><rect x="5.2" y="5.5" width="0.9" height="0.9" fill="#999"/></svg>
<div class="t " style="left:363.00px;top:187.70px;height:14px;line-height:14px;font-size:9.29px;color:#111;">/dev/sdc</div>
<div class="t " style="left:444.90px;top:187.70px;height:14px;line-height:14px;font-size:9.29px;color:#111;">SSD</div>
<div class="t " style="left:502.30px;top:187.70px;height:14px;line-height:14px;font-size:9.29px;color:#111;">No</div>
<div class="t " style="right:702.60px;top:187.70px;height:14px;line-height:14px;font-size:9.29px;color:#111;">12.97 TB</div>
<div class="t " style="right:659.50px;top:187.70px;height:14px;line-height:14px;font-size:9.29px;color:#111;">No</div>
<div class="t " style="left:723.80px;top:187.70px;height:14px;line-height:14px;font-size:9.29px;color:#111;">DE_Series</div>
<div class="t " style="left:867.00px;top:187.70px;height:14px;line-height:14px;font-size:9.29px;color:#111;">6d039ea0005b</div>
<div class="t " style="left:1009.70px;top:187.70px;height:14px;line-height:14px;font-size:9.29px;color:#111;">OK</div>
<div class="t " style="right:259.00px;top:187.70px;height:14px;line-height:14px;font-size:9.29px;color:#111;">No</div>
<div class="t " style="right:194.20px;top:187.70px;height:14px;line-height:14px;font-size:9.29px;color:#111;">N/A</div>
<svg class="a" style="left:344.10px;top:207.84px" width="10" height="8" viewBox="0 0 10 8"><path d="M2.2 0.5 H7.8 L9.5 3.6 V7.5 H0.5 V3.6 Z" stroke="#555" stroke-width="0.9" fill="none"/><path d="M0.5 4.2 H9.5" stroke="#555" stroke-width="0.9"/><rect x="6.6" y="5.5" width="1.1" height="0.9" fill="#777"/><rect x="5.2" y="5.5" width="0.9" height="0.9" fill="#999"/></svg>
<div class="t " style="left:363.00px;top:204.84px;height:14px;line-height:14px;font-size:9.29px;color:#111;">/dev/sdd</div>
<div class="t " style="left:444.90px;top:204.84px;height:14px;line-height:14px;font-size:9.29px;color:#111;">SSD</div>
<div class="t " style="left:502.30px;top:204.84px;height:14px;line-height:14px;font-size:9.29px;color:#111;">No</div>
<div class="t " style="right:702.60px;top:204.84px;height:14px;line-height:14px;font-size:9.29px;color:#111;">12.97 TB</div>
<div class="t " style="right:659.50px;top:204.84px;height:14px;line-height:14px;font-size:9.29px;color:#111;">No</div>
<div class="t " style="left:723.80px;top:204.84px;height:14px;line-height:14px;font-size:9.29px;color:#111;">DE_Series</div>
<div class="t " style="left:867.00px;top:204.84px;height:14px;line-height:14px;font-size:9.29px;color:#111;">6d039ea0005b</div>
<div class="t " style="left:1009.70px;top:204.84px;height:14px;line-height:14px;font-size:9.29px;color:#111;">OK</div>
<div class="t " style="right:259.00px;top:204.84px;height:14px;line-height:14px;font-size:9.29px;color:#111;">No</div>
<div class="t " style="right:194.20px;top:204.84px;height:14px;line-height:14px;font-size:9.29px;color:#111;">N/A</div>
<svg class="a" style="left:344.10px;top:224.98px" width="10" height="8" viewBox="0 0 10 8"><path d="M2.2 0.5 H7.8 L9.5 3.6 V7.5 H0.5 V3.6 Z" stroke="#555" stroke-width="0.9" fill="none"/><path d="M0.5 4.2 H9.5" stroke="#555" stroke-width="0.9"/><rect x="6.6" y="5.5" width="1.1" height="0.9" fill="#777"/><rect x="5.2" y="5.5" width="0.9" height="0.9" fill="#999"/></svg>
<div class="t " style="left:363.00px;top:221.98px;height:14px;line-height:14px;font-size:9.29px;color:#111;">/dev/sde</div>
<div class="t " style="left:444.90px;top:221.98px;height:14px;line-height:14px;font-size:9.29px;color:#111;">SSD</div>
<div class="t " style="left:502.30px;top:221.98px;height:14px;line-height:14px;font-size:9.29px;color:#111;">No</div>
<div class="t " style="right:702.60px;top:221.98px;height:14px;line-height:14px;font-size:9.29px;color:#111;">12.97 TB</div>
<div class="t " style="right:659.50px;top:221.98px;height:14px;line-height:14px;font-size:9.29px;color:#111;">No</div>
<div class="t " style="left:723.80px;top:221.98px;height:14px;line-height:14px;font-size:9.29px;color:#111;">DE_Series</div>
<div class="t " style="left:867.00px;top:221.98px;height:14px;line-height:14px;font-size:9.29px;color:#111;">6d039ea0005b</div>
<div class="t " style="left:1009.70px;top:221.98px;height:14px;line-height:14px;font-size:9.29px;color:#111;">OK</div>
<div class="t " style="right:259.00px;top:221.98px;height:14px;line-height:14px;font-size:9.29px;color:#111;">No</div>
<div class="t " style="right:194.20px;top:221.98px;height:14px;line-height:14px;font-size:9.29px;color:#111;">N/A</div>
<div class="a" style="left:337.20px;top:101.00px;width:1px;height:128.00px;background-image:linear-gradient(#a8a8a8 40%, transparent 40%);background-size:1px 3.3px"></div>
<div class="a" style="left:348.40px;top:117.00px;width:1px;height:43.00px;background-image:linear-gradient(#666 40%, transparent 40%);background-size:1px 3.3px"></div>
<div class="a" style="left:350.80px;top:125.94px;width:1.00px;height:1.00px;background:#888"></div>
<div class="a" style="left:350.80px;top:143.08px;width:1.00px;height:1.00px;background:#888"></div>
<div class="a" style="left:350.80px;top:160.22px;width:1.00px;height:1.00px;background:#888"></div>
<div class="a" style="left:338.50px;top:177.56px;width:2.50px;height:1px;background-image:linear-gradient(90deg,#b0b0b0 50%, transparent 50%);background-size:2px 1px"></div>
<div class="a" style="left:338.50px;top:194.70px;width:2.50px;height:1px;background-image:linear-gradient(90deg,#b0b0b0 50%, transparent 50%);background-size:2px 1px"></div>
<div class="a" style="left:338.50px;top:211.84px;width:2.50px;height:1px;background-image:linear-gradient(90deg,#b0b0b0 50%, transparent 50%);background-size:2px 1px"></div>
<div class="a" style="left:338.50px;top:228.98px;width:2.50px;height:1px;background-image:linear-gradient(90deg,#b0b0b0 50%, transparent 50%);background-size:2px 1px"></div>
<div class="a" style="left:333.50px;top:106.20px;width:7.00px;height:4.50px;background:#fafafa"></div>
<div class="a" style="left:334.30px;top:108.20px;width:5.60px;height:1.00px;background:#444"></div>
<div class="a" style="left:928.80px;top:101.80px;width:58.50px;height:11.80px;background:linear-gradient(90deg,#f3f4f6,#f6f7f9 60%,#f8f9fb);filter:blur(0.4px)"></div>
<div class="t " style="left:987.50px;top:102.50px;height:14px;line-height:14px;font-size:8px;color:#8aa0b0;">..</div>
<div class="a" style="left:929.00px;top:171.00px;width:64.60px;height:65.00px;background:radial-gradient(ellipse at 45% 40%, #e4e4e4 0%, #ececec 45%, #f0f0f0 80%), #ececec;filter:blur(0.6px)"></div>
<div class="a" style="left:929.00px;top:210.00px;width:30.00px;height:26.00px;background:linear-gradient(45deg,#e0e4ea 0%, rgba(236,236,236,0) 70%);filter:blur(1px)"></div>
<div class="a" style="left:2.00px;top:537.00px;width:1366.20px;height:25.00px;background:#f5f5f5"></div>
<div class="a" style="left:9.80px;top:541.00px;width:33.30px;height:16.90px;background:#3892d4;border-radius:2px"></div>
<div class="t " style="left:26.50px;top:542.50px;height:14px;line-height:14px;font-size:9.29px;color:#fff;transform:translateX(-50%);-webkit-text-stroke:0.2px #fff">Tasks</div>
<div class="t " style="left:56.50px;top:542.50px;height:14px;line-height:14px;font-size:9.29px;color:#222;">Cluster log</div>
<div class="a" style="left:448.3px;top:252.3px;width:472.3px;height:298px;box-shadow:0 0 12px 2px rgba(0,0,0,0.22)"></div>
<div class="a" style="left:448.30px;top:252.30px;width:472.30px;height:298.00px;background:#fff;border:1px solid #9a9a9a;border-top-color:#666"></div>
<svg class="a" style="left:454.70px;top:256.00px" width="12" height="13" viewBox="0 0 12 13"><rect x="0.5" y="6" width="6.5" height="5.5" fill="#ccc" stroke="#333" stroke-width="0.8"/><rect x="4.5" y="0.5" width="6.5" height="5.5" fill="#ccc" stroke="#333" stroke-width="0.8"/><rect x="1.5" y="7" width="4.5" height="3" fill="#2040c0"/><rect x="5.5" y="1.5" width="4.5" height="3" fill="#2040c0"/><path d="M3 9 L8.5 3.5" stroke="#ffe000" stroke-width="1.6"/></svg>
<div class="t " style="left:470.30px;top:256.40px;height:14px;line-height:14px;font-size:8.5px;color:#111;">172.16.1.127 - PuTTY</div>
<div class="a" style="left:835.00px;top:262.60px;width:8.00px;height:1.00px;background:#333"></div>
<div class="a" style="left:867.40px;top:259.30px;width:7.40px;height:7.00px;border:1px solid #333"></div>
<svg class="a" style="left:900.00px;top:259.00px" width="8.3" height="7.5" viewBox="0 0 8.3 7.5"><path d="M0.4 0.4 L7.9 7.1 M7.9 0.4 L0.4 7.1" stroke="#222" stroke-width="0.9"/></svg>
<div class="a" style="left:449.30px;top:274.00px;width:458.80px;height:276.30px;background:#000"></div>
<div class="a" style="left:908.10px;top:274.00px;width:11.50px;height:276.30px;background:#f0f0f0"></div>
<svg class="a" style="left:911.00px;top:278.50px" width="7" height="4" viewBox="0 0 7 4"><path d="M0.6 3.6 L3.4 0.8 L6.2 3.6" stroke="#555" stroke-width="1.1" fill="none"/></svg>
<div class="a" style="left:908.50px;top:509.20px;width:11.00px;height:28.30px;background:#cdcdcd"></div>
<svg class="a" style="left:911.00px;top:544.00px" width="7" height="4" viewBox="0 0 7 4"><path d="M0.6 0.4 L3.4 3.2 L6.2 0.4" stroke="#555" stroke-width="1.1" fill="none"/></svg>
<div class="term" style="left:449.8px;top:275.6px">hidraw3          pts           tty15     tty50  ttyS27     vfio
hidraw4          pve           tty16     tty51  ttyS28     vga_arbiter
hpet             random        tty17     tty52  ttyS29     vhci
hugepages        rfkill        tty18     tty53  ttyS3      vhost-net
hwrng            rtc           tty19     tty54  ttyS30     vhost-vsock
i2c-0            rtc0          tty2      tty55  ttyS31     watchdog
initctl          sda           tty20     tty56  ttyS4      watchdog0
input            sda1          tty21     tty57  ttyS5      zero
intel_ifs_0      sda2          tty22     tty58  ttyS6      zfs
intel_ifs_1      sda3          tty23     tty59  ttyS7
ipmi0            sdb           tty24     tty6   ttyS8
isst_interface   sdc           tty25     tty60  ttyS9
kmsg             sdd           tty26     tty61  udmabuf
root@pve1:/dev# /lib/udev/scsi_id -g -u -d /dev/sda
3600508b1001cd3b1a
root@pve1:/dev# /lib/udev/scsi_id -g -u -d /dev/sdb
36d039ea0005b94a60
root@pve1:/dev# /lib/udev/scsi_id -g -u -d /dev/sdc
36d039ea0005b9524
root@pve1:/dev# /lib/udev/scsi_id -g -u -d /dev/sdd
36d039ea0005b94a600
root@pve1:/dev# /lib/udev/scsi_id -g -u -d /dev/sde
36d039ea0005b9524
root@pve1:/dev# </div>
<div class="a" style="left:549.40px;top:433.90px;width:93.30px;height:10.00px;background:linear-gradient(90deg,#1e1e1e,#181818);filter:blur(0.5px)"></div>
<div class="a" style="left:551.00px;top:460.50px;width:91.00px;height:9.00px;background:linear-gradient(90deg,#1c1c1c,#151515);filter:blur(0.5px)"></div>
<div class="a" style="left:546.00px;top:482.30px;width:100.00px;height:9.30px;background:linear-gradient(90deg,#1a1a1a,#141414);filter:blur(0.5px)"></div>
<div class="a" style="left:558.00px;top:506.00px;width:84.00px;height:9.00px;background:linear-gradient(90deg,#2a2a2a,#1e1e1e);filter:blur(0.5px)"></div>
<div class="a" style="left:547.60px;top:526.70px;width:95.00px;height:12.00px;background:linear-gradient(90deg,#505050,#3a3a3a);filter:blur(0.5px)"></div>
<div class="a" style="left:541.00px;top:538.30px;width:6.20px;height:11.50px;background:#00ff00"></div>
</body></html>
